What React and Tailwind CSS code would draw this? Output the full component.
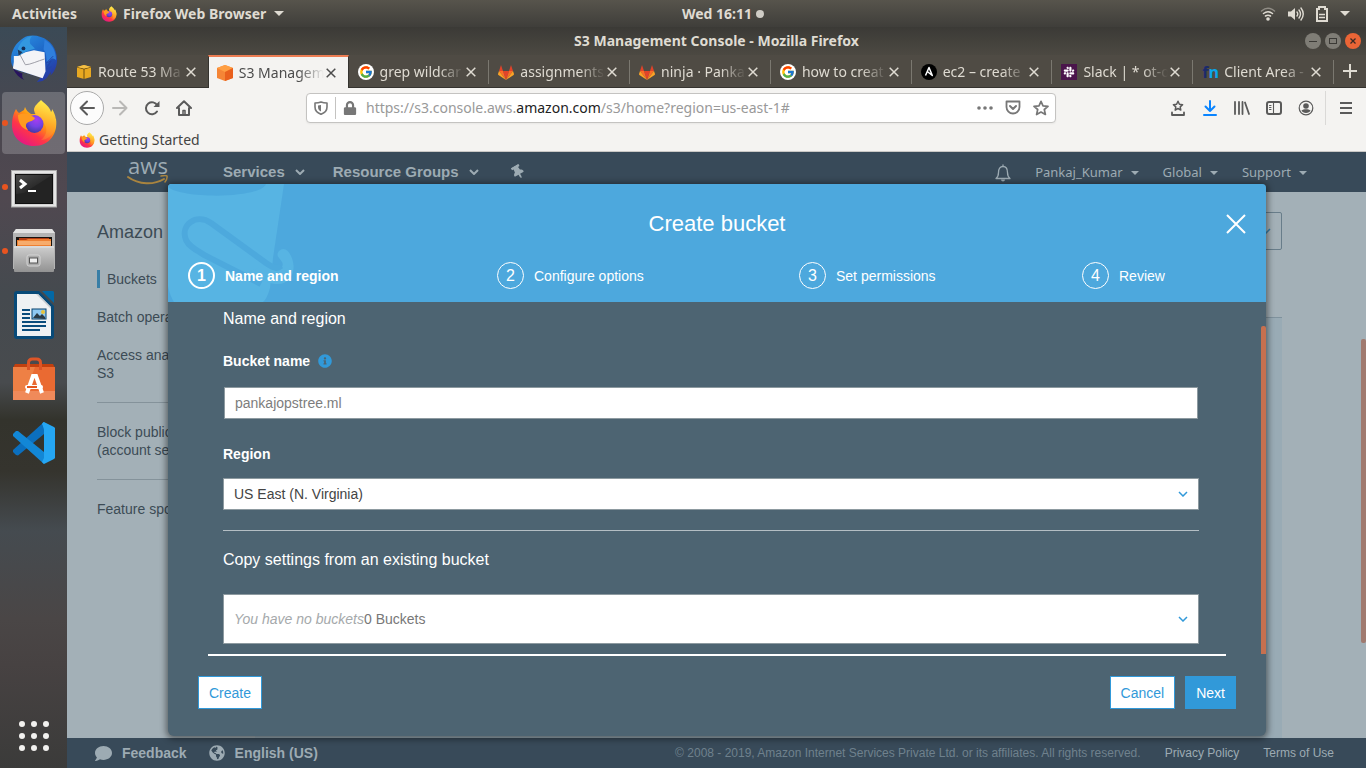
import React from "react";
import { FaThumbtack, FaComment, FaGlobeAmericas, FaSlack, FaLock, FaInfoCircle } from "react-icons/fa";
import { FcGoogle } from "react-icons/fc";

const stroke = { fill: "none", stroke: "currentColor", strokeLinecap: "round", strokeLinejoin: "round" };

function FirefoxIcon({ className, id = "ff" }) {
  return (
    <svg viewBox="0 0 48 48" className={className} aria-hidden="true">
      <defs>
        <linearGradient id={id + "a"} x1="0.85" y1="0.1" x2="0.2" y2="0.95">
          <stop offset="0" stopColor="#fff44f" />
          <stop offset="0.35" stopColor="#ff980e" />
          <stop offset="0.65" stopColor="#ff3647" />
          <stop offset="1" stopColor="#e31587" />
        </linearGradient>
        <radialGradient id={id + "b"} cx="0.6" cy="0.25" r="0.8">
          <stop offset="0" stopColor="#a63df0" />
          <stop offset="0.5" stopColor="#7542e5" />
          <stop offset="1" stopColor="#3c3a9e" />
        </radialGradient>
        <linearGradient id={id + "c"} x1="0.6" y1="0" x2="0.4" y2="1">
          <stop offset="0" stopColor="#fff44f" />
          <stop offset="0.6" stopColor="#ffa726" />
          <stop offset="1" stopColor="#ff7139" stopOpacity="0.6" />
        </linearGradient>
      </defs>
      <path d="M6 10c1 2 2 3 3 4l5-3 1-3c1 3 3 5 6 7h10L46 20c2 14-6 27-22 27C11 47 2 38 2 26c0-6 1-11 4-16Z" fill={"url(#" + id + "a)"} />
      <path d="M31 1c3 3 9 7 10 12 1-1 1-2 1-3 4 6 5 13 3 20-2 6-8 11-14 11 5-4 7-10 4-15-3-6-10-8-11-15 0-4 4-7 7-10Z" fill={"url(#" + id + "c)"} />
      <circle cx="24.500" cy="25" r="9" fill={"url(#" + id + "b)"} />
      <path d="M8 16c5-2 10-2 14 1l3 2c-1 3-5 3-8 5-2 2-1 5 1 7-6-1-10-7-10-15Z" fill="#ff9a1f" />
    </svg>
  );
}

function ThunderbirdIcon() {
  return (
    <svg viewBox="0 0 50 50" className="size-12" aria-hidden="true">
      <defs>
        <linearGradient id="tb" x1="0.2" y1="0" x2="0.9" y2="1">
          <stop offset="0" stopColor="#2a8de0" />
          <stop offset="0.5" stopColor="#1c62c4" />
          <stop offset="1" stopColor="#2b2f9c" />
        </linearGradient>
      </defs>
      <path d="M14 3c5-3 12-3 18-1 10 3 17 12 17 24 0 7-3 13-7 16l1-4-5 7-4 3-6 1 4-5-27-8C2 32 1 29 1 26 1 16 6 8 14 3Z" fill="url(#tb)" />
      <path d="M36 5c9 5 12 13 12 21-3-3-6-2-9 4-2-5 0-10-4-15Z" fill="#2f7fdd" />
      <path d="m45 22-7 7 5-2-6 9 6-3-7 9" fill="none" stroke="#2345a8" />
      <path d="M4 22v6l-1 7 31 10 3-7-1-20-11-2-9 2-8 4Z" fill="#f4f4f7" />
      <path d="m9 18 7 13c5 0 13-4 20-6" fill="none" stroke="#9b9ba4" />
      <path d="M3 35c3 6 7 10 12 12-2-2-3-4-2-7-4-1-7-3-10-5Z" fill="#27135e" />
      <path d="M8 15c2-7 8-13 15-14-2 2-3 5-2 8l5 5-9 3-7 4c-2-1-3-3-2-6Z" fill="#3398df" />
      <circle cx="14" cy="14" r="2" fill="#142e57" />
      <path d="m8 15 1 7 4-4Z" fill="#203b60" />
    </svg>
  );
}

function TerminalIcon() {
  return (
    <svg viewBox="0 0 46 38" className="mt-1 h-[38px] w-[46px]" aria-hidden="true">
      <defs>
        <linearGradient id="term" x1="0" y1="0" x2="1" y2="1">
          <stop offset="0" stopColor="#4a4a4a" />
          <stop offset="1" stopColor="#131313" />
        </linearGradient>
      </defs>
      <rect x="0.500" y="0.500" width="45" height="36.500" fill="#e6e6e6" stroke="#aaa" />
      <rect x="3" y="3" width="40" height="31.500" fill="#c4c4c4" />
      <rect x="4" y="4" width="38" height="30" fill="#101010" />
      <path d="M5 5h36v28H5Z" fill="#232323" />
      <path d="M5 5h36L13 23 5 24Z" fill="url(#term)" />
      <path d="m9 10 5 4-5 4" fill="none" stroke="#fff" strokeWidth="3" />
      <path d="M17 21h8" stroke="#fff" strokeWidth="2" />
    </svg>
  );
}

function FilesIcon() {
  return (
    <svg viewBox="0 0 42 44" className="h-11 w-[42px]" aria-hidden="true">
      <defs>
        <linearGradient id="file" x1="0" y1="0" x2="0" y2="1">
          <stop offset="0" stopColor="#cfcfcf" />
          <stop offset="1" stopColor="#929292" />
        </linearGradient>
      </defs>
      <path d="M3 0h36l3 4v36H0V4Z" fill="#b4b4b4" />
      <path d="M3 0h36l3 4H0Z" fill="#e2e2e2" />
      <path d="M3 8h36v10H3Z" fill="#17120e" />
      <path d="M6 9h30v8H5l1-6Z" fill="#b33c12" />
      <path d="M4 11h9l2-1h23v8H4Z" fill="#ee7f31" />
      <path d="M5 13h33M5 15h33" stroke="#ffd9a8" />
      <rect x="1" y="17" width="40" height="26" rx="1" fill="url(#file)" />
      <path d="M1 18h40" stroke="#e6e6e6" />
      <rect x="14" y="26" width="13" height="11" rx="2" fill="#aaa" stroke="#d5d5d5" />
      <rect x="16.500" y="29" width="8" height="5" fill="#eee" stroke="#555" />
    </svg>
  );
}

function WriterIcon() {
  return (
    <svg viewBox="0 0 40 48" className="h-12 w-10" aria-hidden="true">
      <path d="M3 0h22l15 15v30a3 3 0 0 1-3 3H3a3 3 0 0 1-3-3V3a3 3 0 0 1 3-3Z" fill="#084a78" />
      <path d="M28 0h11l1 1v11Z" fill="#0368a5" />
      <path d="M3 3h21l13 13v29H3Z" fill="#eef1f3" />
      <path d="m24 3 13 13v2L22 3Z" fill="#c8ccd0" />
      <path d="M8 19h8M8 23h8M8 27h8M8 31h24M8 35h24M8 39h18" stroke="#0a4c7c" strokeWidth="2" />
      <rect x="18" y="18" width="14" height="10" fill="#8fc9f2" stroke="#07436f" />
      <circle cx="29" cy="21" r="2" fill="#e8c339" />
      <path d="m19 27 4-5 3 3 2-2 3 3v2Z" fill="#2b3b45" />
    </svg>
  );
}

function SoftwareIcon() {
  return (
    <svg viewBox="0 0 42 44" className="h-11 w-[42px]" aria-hidden="true">
      <path d="M2 7h38l2 4H0Z" fill="#c2400f" />
      <path d="M0 10h42v33H0Z" fill="#ea6a32" />
      <path d="M0 10h22L10 43H0Z" fill="#ee8045" />
      <path d="M0 34h42v9H0Z" fill="#f08a5a" />
      <path d="M15.500 13V6c0-3 2-4 4-4h4c2 0 4 1 4 4v7" fill="none" stroke="#dd5527" strokeWidth="3" />
      <path d="m14 36 6-17h3l6 17" fill="none" stroke="#fff" strokeWidth="4" />
      <path d="M14 30h14" stroke="#fff" strokeWidth="4" strokeLinecap="round" />
      <path d="M14 30h10" stroke="#e4571f" strokeWidth="2" />
    </svg>
  );
}

function CodeIcon() {
  return (
    <svg viewBox="0 0 42 42" className="size-[42px]" aria-hidden="true">
      <path d="M31 0 0 28v2l3 3 2 .5L31 12Z" fill="#0b6fbe" />
      <path d="M31 42 0 14v-2l3-3h2l26 21Z" fill="#1287d6" />
      <path d="m31 0 10 5 1 1v30l-1 1-10 5-2-2 2-4V6l-2-4Z" fill="#25a6f3" />
      <path d="M31 0 29.500 1 31 8Z" fill="#25a6f3" />
    </svg>
  );
}

function CubeIcon({ front, top, side }) {
  return (
    <svg viewBox="0 0 16 16" className="size-4 shrink-0" aria-hidden="true">
      <path d="m8 0 8 3v10l-8 3-8-3V3Z" fill={front} />
      <path d="m8 0 8 3-8 4-8-4Z" fill={top} />
      <path d="m8 7 8-4v10l-8 3Z" fill={side} />
    </svg>
  );
}

function Route53Icon() {
  return (
    <svg viewBox="0 0 16 16" className="size-4 shrink-0" aria-hidden="true">
      <path d="m8 1 7 2v10l-7 2-7-2V3Z" fill="#e8a821" />
      <path d="m1 3 7 2 7-2M8 5v10" fill="none" stroke="#6b4d12" />
      <path d="m1 3 7-2 7 2-7 1.500Z" fill="#f5c046" />
    </svg>
  );
}

function GitlabIcon() {
  return (
    <svg viewBox="0 0 16 15" className="h-[15px] w-4 shrink-0" aria-hidden="true">
      <path d="m8 15 3-9H5Z" fill="#e24329" />
      <path d="M8 15 5 6H1Zm0 0 3-9h4Z" fill="#fc6d26" />
      <path d="M8 15 1 6 0 9c0 .5 0 .8.400 1Zm0 0 7-9 1 3c0 .5 0 .8-.4 1Z" fill="#fca326" />
      <path d="M1 6h4L3 0Zm10 0h4l-2-6Z" fill="#e24329" />
    </svg>
  );
}

function GoogleBadge() {
  return (
    <span className="flex size-4 shrink-0 items-center justify-center rounded-full bg-white">
      <FcGoogle className="size-3.5" />
    </span>
  );
}

function AnsibleIcon() {
  return (
    <svg viewBox="0 0 16 16" className="size-4 shrink-0" aria-hidden="true">
      <circle cx="8" cy="8" r="8" fill="#000" />
      <path d="m4.500 11.500 3.500-8 3.300 8-5-4" fill="none" stroke="#fff" strokeWidth="1.500" strokeLinejoin="round" />
    </svg>
  );
}

const TABS = [
  { title: "Route 53 Ma", icon: <Route53Icon /> },
  { title: "S3 Managem", icon: <CubeIcon front="#f58536" top="#ff9f43" side="#e9601d" />, active: true },
  { title: "grep wildcar", icon: <GoogleBadge /> },
  { title: "assignments", icon: <GitlabIcon /> },
  { title: "ninja · Panka", icon: <GitlabIcon /> },
  { title: "how to creat", icon: <GoogleBadge /> },
  { title: "ec2 – create", icon: <AnsibleIcon /> },
  {
    title: "Slack | * ot-o",
    icon: (
      <span className="flex size-4 shrink-0 items-center justify-center bg-[#4a154b] text-white">
        <FaSlack className="size-3" />
      </span>
    ),
  },
  {
    title: "Client Area -",
    icon: (
      <span className="w-4 shrink-0 font-['Open_Sans',sans-serif] text-base leading-4 font-bold text-[#0ba5e9]">
        <span className="text-[#1b2a6b]">f</span>n
      </span>
    ),
  },
];

function TopBar() {
  return (
    <header className="grid h-[27px] shrink-0 grid-cols-[1fr_auto_1fr] items-center bg-linear-to-b from-[#57544c] to-[#3f3e3a] px-3 text-sm font-bold text-[#dfdbd2]">
      <div className="flex items-center">
        <button className="mr-6">Activities</button>
        <button className="flex items-center">
          <FirefoxIcon className="mr-1.5 size-4" id="ffs" />
          Firefox Web Browser
          <Caret className="ml-2 h-[5px] w-2.5" />
        </button>
      </div>
      <div className="ml-20 flex items-center gap-1">
        Wed 16:11
        <span className="size-2 rounded-full bg-[#cfccc5]" />
      </div>
      <div className="flex items-center justify-end gap-3 pr-1">
        <svg viewBox="0 0 16 14" className="h-3.5 w-4" aria-label="Wi-Fi">
          <g {...stroke} strokeWidth="1.500">
            <path d="M1.500 4c4-3.300 9-3.300 13 0" opacity=".45" />
            <path d="M3.500 6.500c3-2.300 6-2.300 9 0M5.500 9c2-1.300 3-1.300 5 0" />
          </g>
          <circle cx="8" cy="12" r="1.800" fill="currentColor" />
        </svg>
        <svg viewBox="0 0 16 14" className="h-3.5 w-4" aria-label="Volume">
          <path d="M0 4.500h3L7 1v12L3 9.500H0Z" fill="currentColor" />
          <path d="M9 5q1.500 2 0 4M11 3q3 4 0 8M13 1q4.500 6 0 12" {...stroke} strokeWidth="1.400" />
        </svg>
        <svg viewBox="0 0 12 16" className="h-4 w-3" aria-label="Battery">
          <path d="M1 3h2V1h6v2h2v12H1Z" fill="none" stroke="currentColor" strokeWidth="2" />
          <path d="M3 8.500h6M3 11.500h6" stroke="currentColor" strokeWidth="1.500" />
        </svg>
        <Caret className="h-[5px] w-2.5" />
      </div>
    </header>
  );
}

function Caret({ className }) {
  return (
    <svg viewBox="0 0 10 5" className={className} aria-hidden="true">
      <path d="M0 0h10L5 5Z" fill="currentColor" />
    </svg>
  );
}

function Chevron({ className, width = 2 }) {
  return (
    <svg viewBox="0 0 10 6" className={className} aria-hidden="true">
      <path d="m1 1 4 4 4-4" fill="none" stroke="currentColor" strokeWidth={width} />
    </svg>
  );
}

const DOCK = [
  { name: "Thunderbird", icon: <ThunderbirdIcon /> },
  { name: "Firefox", icon: <FirefoxIcon className="size-12" id="ffl" />, running: true, active: true },
  { name: "Terminal", icon: <TerminalIcon />, running: true },
  { name: "Files", icon: <FilesIcon />, running: true },
  { name: "Writer", icon: <WriterIcon /> },
  { name: "Software", icon: <SoftwareIcon /> },
  { name: "Code", icon: <CodeIcon /> },
];

function Dock() {
  return (
    <nav
      aria-label="Dock"
      className="flex w-[67px] shrink-0 flex-col justify-between bg-[linear-gradient(to_bottom,#3b4a56_0%,#4b474f_14%,#504850_23%,#454a4f_36%,#484b4e_48%,#33332c_53%,#35342e_60%,#454b50_68%,#4a4646_80%,#474242_86%,#3b3b3a_100%)]"
    >
      <div className="flex flex-col">
        {DOCK.map((app) => (
          <button key={app.name} aria-label={app.name} className="relative flex h-16 items-center justify-center">
            {app.active && <span className="absolute inset-x-0.5 inset-y-px rounded-sm bg-white/20" />}
            {app.running && <span className="absolute left-0.5 size-1.5 rounded-full bg-[#e95420]" />}
            <span className="relative flex">{app.icon}</span>
          </button>
        ))}
      </div>
      <button aria-label="Show Applications" className="flex h-16 items-center justify-center">
        <span className="grid grid-cols-3 gap-1.5">
          {[0, 1, 2, 3, 4, 5, 6, 7, 8].map((i) => (
            <span key={i} className="size-1.5 rounded-full bg-[#f2f1ef]" />
          ))}
        </span>
      </button>
    </nav>
  );
}

function TitleBar() {
  return (
    <div className="grid h-7 grid-cols-[1fr_auto_1fr] items-center bg-linear-to-b from-[#3b3a36] to-[#4c4942] pr-[5px] pl-[5px] text-sm font-bold text-[#dfdbd2]">
      <span />
      <h1>S3 Management Console - Mozilla Firefox</h1>
      <div className="flex justify-end gap-1">
        <button aria-label="Minimize" className="flex size-4 items-center justify-center rounded-full bg-[#7f7d76] text-[#3b3a36]">
          <svg viewBox="0 0 16 16" className="size-4"><path d="M4 8.500h8" stroke="currentColor" /></svg>
        </button>
        <button aria-label="Maximize" className="flex size-4 items-center justify-center rounded-full bg-[#7f7d76] text-[#3b3a36]">
          <svg viewBox="0 0 16 16" className="size-4"><rect x="4.500" y="5.500" width="7" height="5" fill="none" stroke="currentColor" /></svg>
        </button>
        <button aria-label="Close window" className="flex size-4 items-center justify-center rounded-full bg-[#eb6536] text-[#3b2a24]">
          <svg viewBox="0 0 16 16" className="size-4"><path d="m5.500 5.500 5 5m0-5-5 5" stroke="currentColor" strokeWidth="1.300" /></svg>
        </button>
      </div>
    </div>
  );
}

function CloseX({ className }) {
  return (
    <svg viewBox="0 0 10 10" className={className} aria-hidden="true">
      <path d="m.7.700 8.600 8.600m0-8.600L.7 9.300" fill="none" stroke="currentColor" strokeWidth="1.500" />
    </svg>
  );
}

function TabStrip() {
  return (
    <div className="grid h-[33px] grid-cols-[repeat(9,minmax(0,1fr))_32px] border-b border-[#35332f] bg-[#4f4b44] text-sm text-[#dfdbd2]">
      {TABS.map((tab, i) => (
        <div
          key={tab.title}
          className={
            tab.active
              ? "-mb-px flex items-center border-x border-t-2 border-x-[#35332f] border-t-[#ed7d53] bg-[#f4f3f1] pl-2 text-[#4c4c4c]"
              : "flex items-center border-t-2 border-t-transparent pl-[9px]"
          }
        >
          {tab.icon}
          <span className="ml-1.5 min-w-0 flex-1 overflow-hidden mask-r-from-70% mask-r-to-100% whitespace-nowrap">{tab.title}</span>
          <button aria-label="Close tab" className="ml-0.5">
            <CloseX className="size-2.5" />
          </button>
          <span className={i === 0 || tab.active ? "ml-3 h-6" : "ml-3 h-6 w-px bg-[#7b7870]"} />
        </div>
      ))}
      <button aria-label="New tab" className="flex items-center justify-center">
        <svg viewBox="0 0 14 14" className="size-3.5"><path d="M7 0v14M0 7h14" stroke="currentColor" strokeWidth="2" /></svg>
      </button>
    </div>
  );
}

function IconButton({ label, children, className = "w-8" }) {
  return (
    <button aria-label={label} className={"flex h-7 shrink-0 items-center justify-center " + className}>
      {children}
    </button>
  );
}

function Toolbar() {
  return (
    <div className="flex h-10 items-center bg-[#f4f3f1] pr-1 pl-[3px] text-[#5a5a5a]">
      <button aria-label="Back" className="flex size-[34px] items-center justify-center rounded-full border border-[#aaa] bg-[#fcfcfc]">
        <svg viewBox="0 0 16 16" className="size-4"><path d="M15 8H1.500M8 1.500 1.500 8 8 14.500" {...stroke} strokeWidth="2" /></svg>
      </button>
      <IconButton label="Forward" className="w-8 text-[#b9b8b6]">
        <svg viewBox="0 0 16 16" className="size-4"><path d="M1 8h13.500M8 1.500 14.500 8 8 14.500" {...stroke} strokeWidth="2" /></svg>
      </IconButton>
      <IconButton label="Reload">
        <svg viewBox="0 0 16 16" className="size-4">
          <path d="M13 11.500a6 6 0 1 1 .3-6" {...stroke} strokeWidth="2" />
          <path d="M15.500 1v6h-6Z" fill="currentColor" />
        </svg>
      </IconButton>
      <IconButton label="Home">
        <svg viewBox="0 0 16 16" className="size-4">
          <path d="m1 8 7-6.700L15 8M3 8v7h10V8" {...stroke} strokeWidth="2" />
          <path d="M7 15v-4.500h2V15" {...stroke} strokeWidth="1.500" />
        </svg>
      </IconButton>
      <div className="mx-[106px] flex h-[30px] min-w-0 flex-1 items-center rounded-sm border border-[#c4c3c1] bg-white text-[#777] shadow-xs">
        <IconButton label="Tracking protection" className="w-7">
          <svg viewBox="0 0 14 14" className="size-3.5">
            <path d="M7 1c2 .8 4 1 6 1v4c0 4-2.500 6-6 7.300C3.500 12 1 10 1 6V2c2 0 4-.2 6-1Z" {...stroke} strokeWidth="1.600" />
            <path d="M7 4v6.500C5 9.500 4 8 4 6V4.500Z" fill="currentColor" />
          </svg>
        </IconButton>
        <span className="h-[22px] w-px bg-[#c4c3c1]" />
        <IconButton label="Site information" className="w-7">
          <FaLock className="size-3.5" />
        </IconButton>
        <div role="textbox" aria-label="Address" className="ml-0.5 min-w-0 flex-1 overflow-hidden text-sm whitespace-nowrap text-[#999]">
          https://s3.console.aws.<span className="text-[#222]">amazon.com</span>/s3/home?region=us-east-1#
        </div>
        <IconButton label="Page actions" className="w-7">
          <svg viewBox="0 0 16 4" className="h-1 w-4" fill="currentColor">
            <circle cx="2" cy="2" r="1.800" /><circle cx="8" cy="2" r="1.800" /><circle cx="14" cy="2" r="1.800" />
          </svg>
        </IconButton>
        <IconButton label="Save to Pocket" className="w-7">
          <svg viewBox="0 0 16 16" className="size-4">
            <path d="M1.500 1.500h13v5.500a6.500 6.500 0 0 1-13 0Z" {...stroke} strokeWidth="1.800" />
            <path d="m5 6 3 3 3-3" {...stroke} strokeWidth="2" />
          </svg>
        </IconButton>
        <IconButton label="Bookmark" className="w-7">
          <svg viewBox="0 0 16 16" className="size-4">
            <path d="m8 1.300 2 4.500 5 .5-3.700 3.200 1.100 5L8 12l-4.400 2.500 1.100-5L1 6.300l5-.5Z" {...stroke} strokeWidth="1.700" />
          </svg>
        </IconButton>
      </div>
      <IconButton label="Bookmarks menu">
        <svg viewBox="0 0 16 16" className="size-4">
          <path d="m8 1.300 1.400 3 3.200.4-2.400 2.200.6 3.200L8 8.500l-2.800 1.600.6-3.200-2.400-2.200 3.200-.4Z" {...stroke} strokeWidth="1.500" />
          <path d="M2 12.500V15h12v-2.500" {...stroke} strokeWidth="1.800" />
        </svg>
      </IconButton>
      <IconButton label="Downloads" className="w-8 text-[#0a84ff]">
        <svg viewBox="0 0 14 16" className="h-4 w-3.5"><path d="M7 1v10M2.500 6.500 7 11l4.500-4.500M1 15h12" {...stroke} strokeWidth="2" /></svg>
      </IconButton>
      <IconButton label="Library">
        <svg viewBox="0 0 16 16" className="size-4"><path d="M1 2v12M5 2v12M8.500 2v12M11 2.500l4 11.500" {...stroke} strokeWidth="1.800" /></svg>
      </IconButton>
      <IconButton label="Sidebars">
        <svg viewBox="0 0 16 14" className="h-3.5 w-4">
          <rect x="1" y="1" width="14" height="12" rx="2" {...stroke} strokeWidth="2" />
          <path d="M7.500 1v12M3.500 4.500H5M3.500 6.500H5M3.500 8.500H5" {...stroke} strokeWidth="1.100" />
        </svg>
      </IconButton>
      <IconButton label="Account">
        <svg viewBox="0 0 16 16" className="size-4">
          <circle cx="8" cy="8" r="6.800" {...stroke} strokeWidth="1.200" />
          <circle cx="8" cy="6" r="2.800" fill="currentColor" />
          <path d="M3.500 10.500c2-1.700 7-1.700 9 0-1 3.300-8 3.300-9 0Z" fill="currentColor" />
        </svg>
      </IconButton>
      <span className="mr-1 ml-[3px] h-[34px] w-px bg-[#dad9d7]" />
      <IconButton label="Menu">
        <svg viewBox="0 0 12 12" className="size-3"><path d="M0 1h12M0 6h12M0 11h12" stroke="currentColor" strokeWidth="2" /></svg>
      </IconButton>
    </div>
  );
}

function AwsNav() {
  return (
    <nav className="flex h-10 items-center bg-[#384a59] pr-[59px] pl-[60px] font-['Liberation_Sans',sans-serif] text-[15px] font-bold text-[#9dabb3]">
      <a href="#home" className="mr-[54px] block w-[42px] text-center font-['Open_Sans',sans-serif] text-[22px] font-medium">
        <span className="block h-4 leading-3">aws</span>
        <svg viewBox="0 0 42 10" className="h-2.5 w-[42px]" aria-hidden="true">
          <path d="M1 2c11 8 26 8 36 2" fill="none" stroke="#a9843f" strokeWidth="2" strokeLinecap="round" />
          <path d="M34 1c3-.7 5-.7 6 0 .5 2-.5 4-2 6" fill="none" stroke="#a9843f" strokeWidth="1.500" strokeLinecap="round" />
        </svg>
      </a>
      <button className="mr-7 flex items-center gap-2.5">Services <Chevron className="h-1.5 w-2.5" /></button>
      <button className="mr-8 flex items-center gap-2.5">Resource Groups <Chevron className="h-1.5 w-2.5" /></button>
      <button aria-label="Pin shortcuts"><FaThumbtack className="size-3.5 -rotate-30" /></button>
      <div className="ml-auto flex items-center gap-6 pt-0.5 font-['Noto_Sans',sans-serif] text-[13px] font-normal">
        <button aria-label="Notifications">
          <svg viewBox="0 0 16 18" className="h-[18px] w-4">
            <path d="M1 14.500c2-1.500 2.500-3 2.500-6C3.500 5 5 2.500 8 2.500S12.500 5 12.500 8.500c0 3 .5 4.500 2.500 6ZM8 2.500V1" {...stroke} strokeWidth="1.300" />
            <path d="M6 15.500h4a2 2 0 0 1-4 0Z" fill="currentColor" />
          </svg>
        </button>
        <button className="flex items-center gap-2">Pankaj_Kumar <Caret className="h-1 w-2" /></button>
        <button className="flex items-center gap-2">Global <Caret className="h-1 w-2" /></button>
        <button className="flex items-center gap-2">Support <Caret className="h-1 w-2" /></button>
      </div>
    </nav>
  );
}

function ConsolePage() {
  return (
    <div className="flex flex-1 bg-[#a3b0b7] pl-[30px] text-[#3c4b55]">
      <aside className="flex w-[130px] shrink-0 flex-col pt-7 text-sm leading-[18px]">
        <h2 className="text-lg leading-6">Amazon S3</h2>
        <a href="#buckets" className="mt-[26px] border-l-3 border-[#387ea6] pl-[7px]">Buckets</a>
        <a href="#batch" className="mt-5">Batch operations</a>
        <a href="#analyzer" className="mt-5">Access analyzer for S3</a>
        <hr className="my-5 border-[#84929a]" />
        <a href="#block">Block public access (account settings)</a>
        <hr className="my-5 border-[#84929a]" />
        <a href="#spotlight">Feature spotlight</a>
      </aside>
      <section className="mr-[79px] ml-7 flex flex-1 flex-col pt-5">
        <button aria-label="Discover the console" className="flex h-[38px] items-center justify-end rounded-xs border border-[#687d8a] pr-2.5 text-[#387ea6]">
          <Chevron className="h-1.5 w-2.5" width={1.5} />
        </button>
        <div className="mt-[67px] flex-1 border-t border-[#7f929d] bg-[#99abb5]" />
      </section>
      <span className="mt-[147px] h-[304px] w-[5px] rounded-xs bg-[#a07a6f]" />
    </div>
  );
}

function PageFooter() {
  return (
    <footer className="flex h-[30px] items-center bg-[#384a59] pr-8 pl-7 text-xs text-[#9dabb3]">
      <button className="mr-[22px] flex items-center gap-2.5 text-sm font-bold"><FaComment className="size-[17px]" />Feedback</button>
      <button className="flex items-center gap-2.5 text-sm font-bold"><FaGlobeAmericas className="size-4" />English (US)</button>
      <span className="mr-6 ml-auto text-[#6f818d]">© 2008 - 2019, Amazon Internet Services Private Ltd. or its affiliates. All rights reserved.</span>
      <a href="#privacy" className="mr-6">Privacy Policy</a>
      <a href="#terms">Terms of Use</a>
    </footer>
  );
}

const STEPS = ["Name and region", "Configure options", "Set permissions", "Review"];

function BucketArt() {
  return (
    <svg viewBox="0 0 134 118" className="absolute top-0 left-0 h-[118px] w-[134px]" aria-hidden="true">
      <path d="M0 0h116L105 74l-3 30q-3 11-7 14H6Q2 112 0 102Z" fill="#57b4e3" />
      <path d="M0 0h98c-6 15-84 15-98 3Z" fill="#4da9dd" />
      <path d="M99 80c11 8 18 4 15-2-2-4-7-6-3-11 4-4 9-2 12 5 7 15-1 28-13 28-10 0-21-5-31-11Z" fill="#57b4e3" />
      <path d="M113 82c-4 4-9 1-15-3L43 39C28 29 12 41 18 56c3 7 12 11 20 16l55 28" fill="none" stroke="#4da9dd" strokeWidth="6" />
    </svg>
  );
}

function CreateBucketDialog() {
  return (
    <div
      role="dialog"
      aria-label="Create bucket"
      className="absolute top-8 right-[100px] left-[101px] flex flex-col overflow-hidden rounded-t-sm rounded-b-md bg-[#4d6472] text-sm text-white shadow-[0_1px_6px_2px_rgba(0,0,0,0.45)]"
    >
      <header className="relative flex h-[118px] flex-col bg-[#4da8dd]">
        <BucketArt />
        <div className="relative mt-6 flex items-center justify-center">
          <h2 className="text-[22px] leading-8">Create bucket</h2>
          <button aria-label="Close" className="absolute right-5">
            <CloseBig />
          </button>
        </div>
        <ol className="relative mt-[22px] grid grid-cols-[309fr_302fr_283fr_184fr] pl-5">
          {STEPS.map((step, i) => (
            <li key={step} className={i === 0 ? "flex items-center gap-2.5 font-bold" : "flex items-center gap-2.5"}>
              <span
                className={
                  i === 0
                    ? "flex size-[27px] items-center justify-center rounded-full border-2 border-white text-base"
                    : "flex size-[27px] items-center justify-center rounded-full border border-white text-base"
                }
              >
                {i + 1}
              </span>
              {step}
            </li>
          ))}
        </ol>
      </header>
      <div className="flex">
        <form className="flex min-w-0 flex-1 flex-col pt-[5px] pr-[62px] pl-[55px]">
          <h3 className="text-base leading-6">Name and region</h3>
          <label htmlFor="bucket" className="mt-5 flex items-center gap-2 leading-5 font-bold">
            Bucket name <FaInfoCircle className="size-3.5 text-[#3199d9]" />
          </label>
          <input
            id="bucket"
            defaultValue="pankajopstree.ml"
            className="mx-px mt-4 h-8 border border-[#8d9aa0] bg-white px-2.5 text-[#7d7d7d] outline-none"
          />
          <label htmlFor="region" className="mt-[25px] leading-5 font-bold">Region</label>
          <div className="relative mt-3.5 flex items-center">
            <select id="region" className="h-8 w-full appearance-none border border-[#8d9aa0] bg-white px-2.5 text-[#444] outline-none">
              <option>US East (N. Virginia)</option>
            </select>
            <Chevron className="pointer-events-none absolute right-[11px] h-1.5 w-2.5 text-[#3199d9]" width={1.5} />
          </div>
          <hr className="mt-5 border-[#b4bec4]" />
          <h3 className="mt-[17px] text-base leading-6">Copy settings from an existing bucket</h3>
          <button
            type="button"
            aria-haspopup="listbox"
            className="mt-[22px] mb-2.5 flex h-[50px] items-center justify-between border border-[#8d9aa0] bg-white pr-2.5 pl-2.5 text-[#777]"
          >
            <span><em className="text-[#a5a9ab]">You have no buckets</em>0 Buckets</span>
            <Chevron className="h-1.5 w-2.5 text-[#3199d9]" width={1.5} />
          </button>
        </form>
        <span className="mt-6 w-[5px] rounded-t-xs bg-[#c7704f]" />
      </div>
      <footer className="px-[30px] pb-[27px]">
        <div className="mx-2.5 h-0.5 bg-white" />
        <div className="mt-5 flex gap-2.5">
          <button className="mr-auto h-[33px] border border-[#3199d9] bg-white px-2.5 text-[#3199d9]">Create</button>
          <button className="h-[33px] border border-[#3199d9] bg-white px-2.5 text-[#3199d9]">Cancel</button>
          <button className="h-[33px] border border-[#3199d9] bg-[#3199d9] px-2.5">Next</button>
        </div>
      </footer>
    </div>
  );
}

function CloseBig() {
  return (
    <svg viewBox="0 0 20 20" className="size-5" aria-hidden="true">
      <path d="m1 1 18 18M19 1 1 19" stroke="#fff" strokeWidth="2" />
    </svg>
  );
}

export default function App() {
  return (
    <div className="flex min-h-screen flex-col font-['Noto_Sans',sans-serif]">
      <TopBar />
      <div className="flex flex-1">
        <Dock />
        <div className="flex min-w-0 flex-1 flex-col">
          <TitleBar />
          <TabStrip />
          <Toolbar />
          <div className="flex h-6 items-center border-b border-[#c9c8c5] bg-[#f4f3f1] px-3 text-sm text-[#444]">
            <a href="#start" className="flex items-center gap-1"><FirefoxIcon className="size-4" id="ffb" />Getting Started</a>
          </div>
          <main className="relative flex flex-1 flex-col font-['Liberation_Sans',sans-serif]">
            <AwsNav />
            <ConsolePage />
            <PageFooter />
            <CreateBucketDialog />
          </main>
        </div>
      </div>
    </div>
  );
}
